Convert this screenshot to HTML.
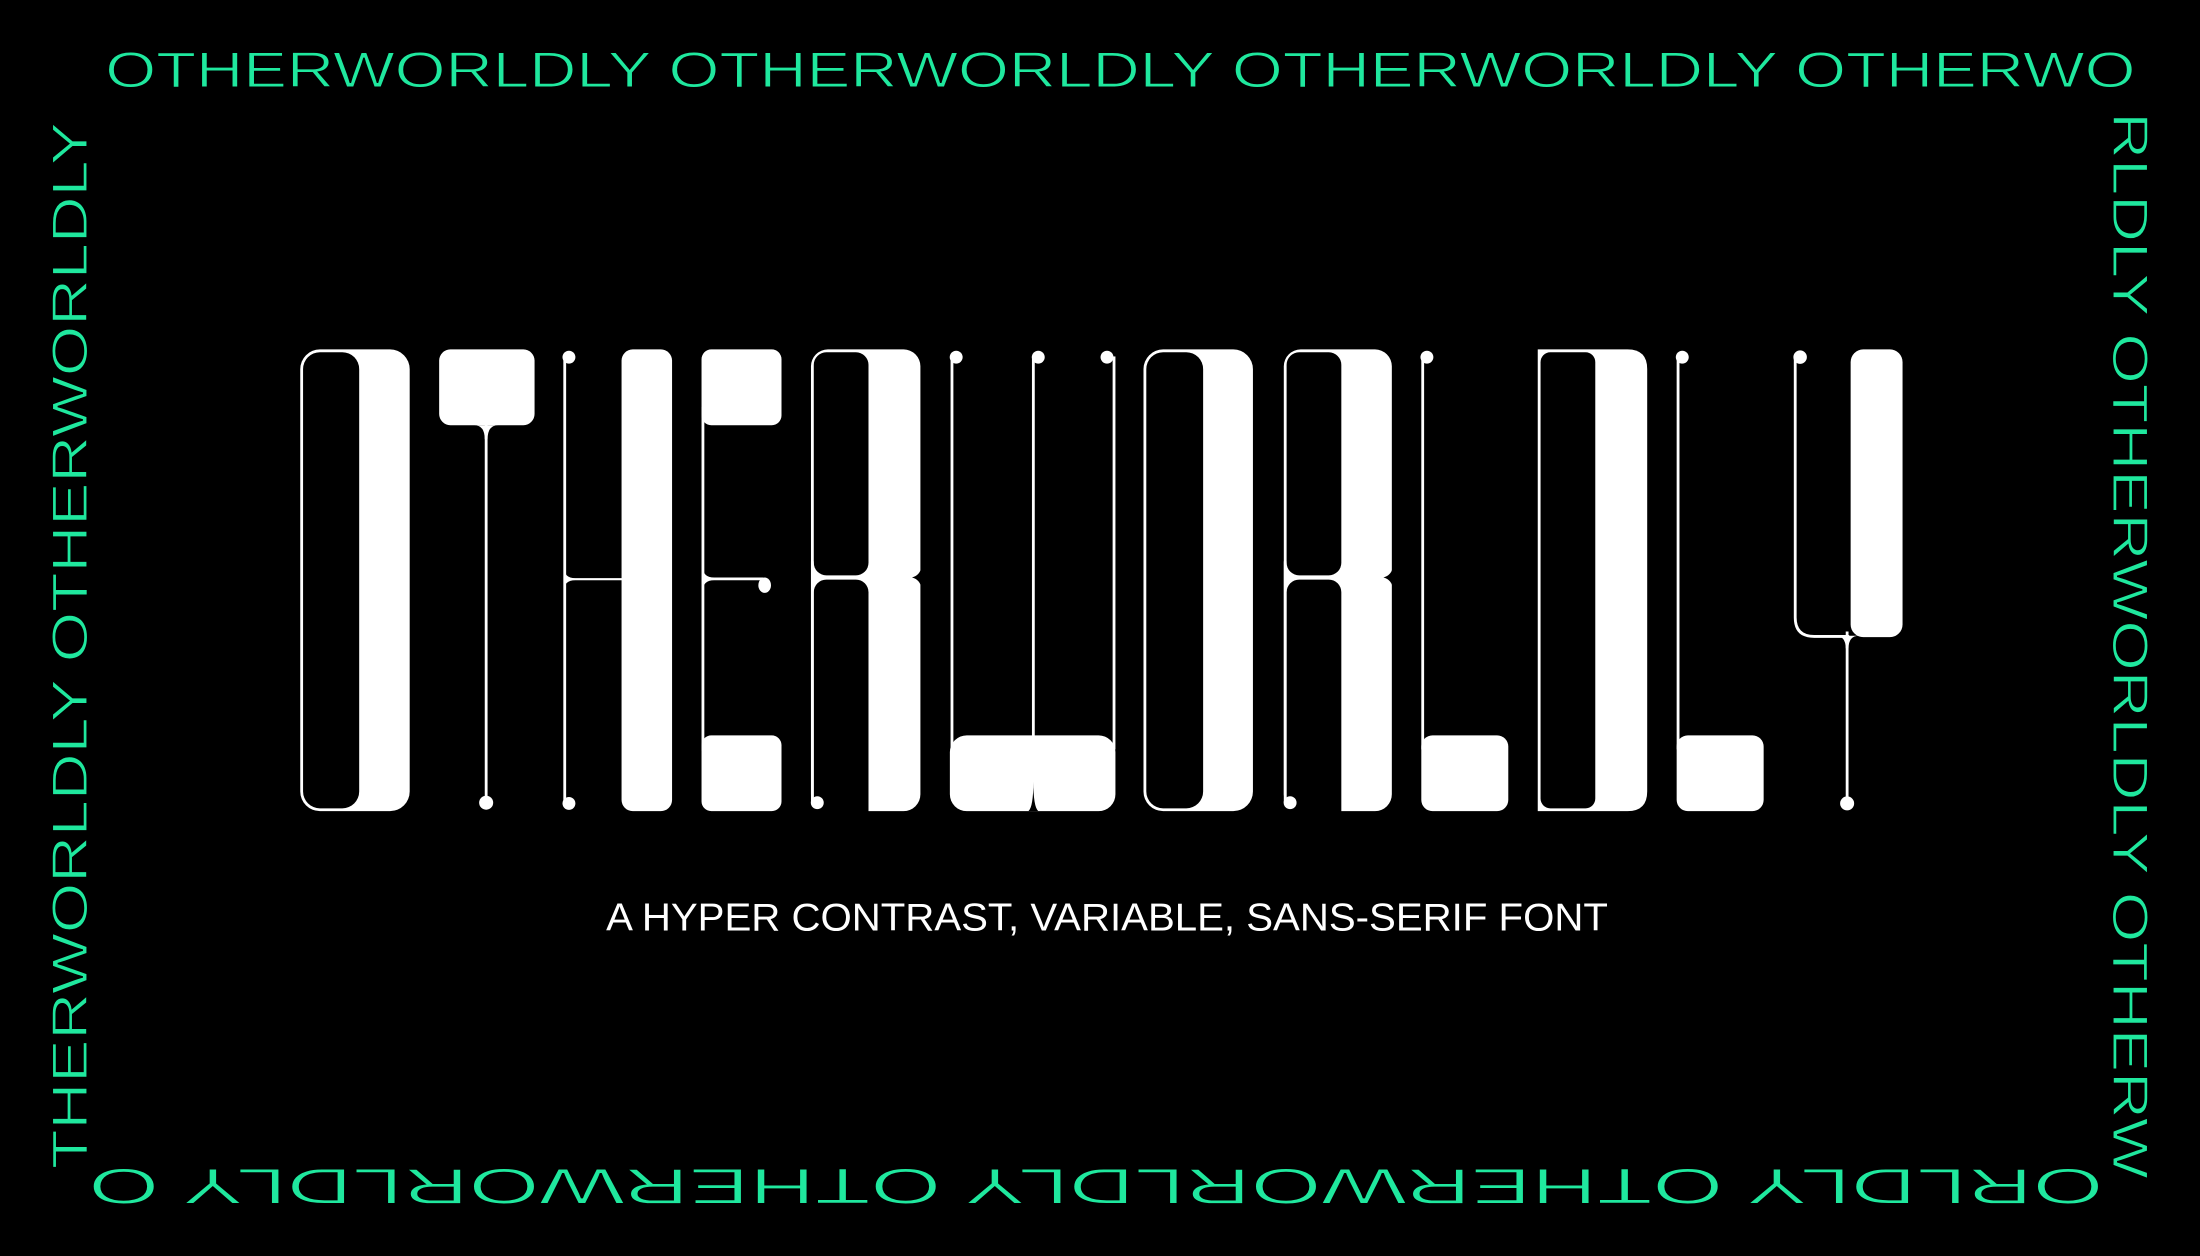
<!DOCTYPE html>
<html><head><meta charset="utf-8"><style>
html,body{margin:0;padding:0;background:#000;width:2200px;height:1256px;overflow:hidden}
svg{display:block}
.g{font-family:"Liberation Sans",sans-serif;font-size:36px;fill:#1fe89e;stroke:#000;stroke-width:0.8px}
</style></head><body>
<svg width="2200" height="1256" viewBox="0 0 1568 895" preserveAspectRatio="none" xmlns="http://www.w3.org/2000/svg">
<rect width="1568" height="895" fill="#000"/>
<g fill="#fff">
<!-- O -->
<rect x="214" y="249" width="78" height="329" rx="14"/>
<rect x="216" y="251" width="40" height="325" rx="12" fill="#000"/>
<!-- T -->
<rect x="313" y="249" width="68" height="54" rx="8"/>
<rect x="345.5" y="300" width="2" height="272"/>
<path d="M338 303 Q345.5 303 345.5 313 L347.5 313 Q347.5 303 355 303 Z"/>
<circle cx="346.5" cy="572" r="5"/>
<!-- H -->
<rect x="401.5" y="254" width="2" height="319"/>
<circle cx="405.5" cy="254.5" r="4.6"/>
<circle cx="405.5" cy="572.5" r="4.6"/>
<rect x="443" y="249" width="36" height="329" rx="8"/>
<path d="M402 404 Q402 412 410 412 L444 412 L444 413.5 L410 413.5 Q402 413.5 402 421 Z"/>
<!-- E -->
<rect x="500" y="249" width="57" height="54" rx="7"/>
<rect x="500" y="290" width="2" height="245"/>
<rect x="500" y="524" width="57" height="54" rx="7"/>
<path d="M501 404 Q501 411.5 509 411.5 L544 411.5 L544 413.5 L509 413.5 Q501 413.5 501 421 Z"/>
<ellipse cx="545" cy="417" rx="4.5" ry="5.5"/>
<!-- R -->
<rect x="578" y="249" width="78" height="329" rx="12"/>
<rect x="580" y="251" width="39" height="159" rx="9" fill="#000"/>
<rect x="580" y="413" width="39" height="175" rx="9" fill="#000"/>
<rect x="578" y="400" width="2" height="172"/>
<circle cx="582.5" cy="572" r="4.6"/>
<path d="M657 403 Q656 410 650 411.5 Q656 413 657 420 Z" fill="#000"/>
<!-- W -->
<rect x="677.5" y="254" width="2" height="280"/>
<rect x="735.5" y="254" width="2" height="280"/>
<rect x="793" y="254" width="2" height="280"/>
<circle cx="681.5" cy="254.5" r="4.6"/>
<circle cx="740" cy="254.5" r="4.6"/>
<circle cx="789" cy="254.5" r="4.6"/>
<rect x="677" y="524" width="118" height="54" rx="12"/>
<path d="M733 578 Q736.5 575 736.5 557 Q736.5 575 740 578 Z" fill="#000"/>
<!-- O -->
<rect x="815" y="249" width="78" height="329" rx="14"/>
<rect x="817" y="251" width="40.5" height="325" rx="12" fill="#000"/>
<!-- R -->
<rect x="915" y="249" width="77" height="329" rx="12"/>
<rect x="917" y="251" width="39" height="159" rx="9" fill="#000"/>
<rect x="917" y="413" width="39" height="175" rx="9" fill="#000"/>
<rect x="915" y="400" width="2" height="172"/>
<circle cx="919.5" cy="572" r="4.6"/>
<path d="M993 403 Q992 410 986 411.5 Q992 413 993 420 Z" fill="#000"/>
<!-- L -->
<rect x="1013" y="254" width="2" height="280"/>
<circle cx="1017" cy="254.5" r="4.6"/>
<rect x="1013" y="524" width="62" height="54" rx="8"/>
<!-- D -->
<path d="M1096 249 H1160 Q1174 249 1174 263 V564 Q1174 578 1160 578 H1096 Z"/>
<rect x="1098" y="251" width="39" height="325" rx="7" fill="#000"/>
<!-- L -->
<rect x="1195" y="254" width="2" height="280"/>
<circle cx="1199" cy="254.5" r="4.6"/>
<rect x="1195" y="524" width="62" height="54" rx="8"/>
<!-- Y -->
<circle cx="1283" cy="254.5" r="4.8"/>
<path d="M1279.5 254 V440 Q1279.5 453.5 1293 453.5 H1318" fill="none" stroke="#fff" stroke-width="2"/>
<rect x="1319" y="249" width="37" height="205" rx="9"/>
<rect x="1315.5" y="450" width="2" height="122"/>
<path d="M1308 453 Q1315.5 453 1315.5 462 L1317.5 462 Q1317.5 453 1325 453 Z"/>
<circle cx="1316.5" cy="572.5" r="5"/>
</g>
<text class="g" x="75" y="62" textLength="1447" lengthAdjust="spacingAndGlyphs">OTHERWORLDLY OTHERWORLDLY OTHERWORLDLY OTHERWO</text>
<text class="g" transform="translate(62,833) rotate(-90)" textLength="746" lengthAdjust="spacingAndGlyphs">THERWORLDLY OTHERWORLDLY</text>
<text class="g" transform="translate(1506,80) rotate(90)" textLength="760" lengthAdjust="spacingAndGlyphs">RLDLY OTHERWORLDLY OTHERW</text>
<text class="g" transform="translate(1499,833) rotate(180)" textLength="1436" lengthAdjust="spacingAndGlyphs">ORLDLY OTHERWORLDLY OTHERWORLDLY O</text>
<text x="432" y="663" fill="#fff" font-family="Liberation Sans, sans-serif" font-size="28" textLength="714" lengthAdjust="spacingAndGlyphs">A HYPER CONTRAST, VARIABLE, SANS-SERIF FONT</text>
</svg>
</body></html>
